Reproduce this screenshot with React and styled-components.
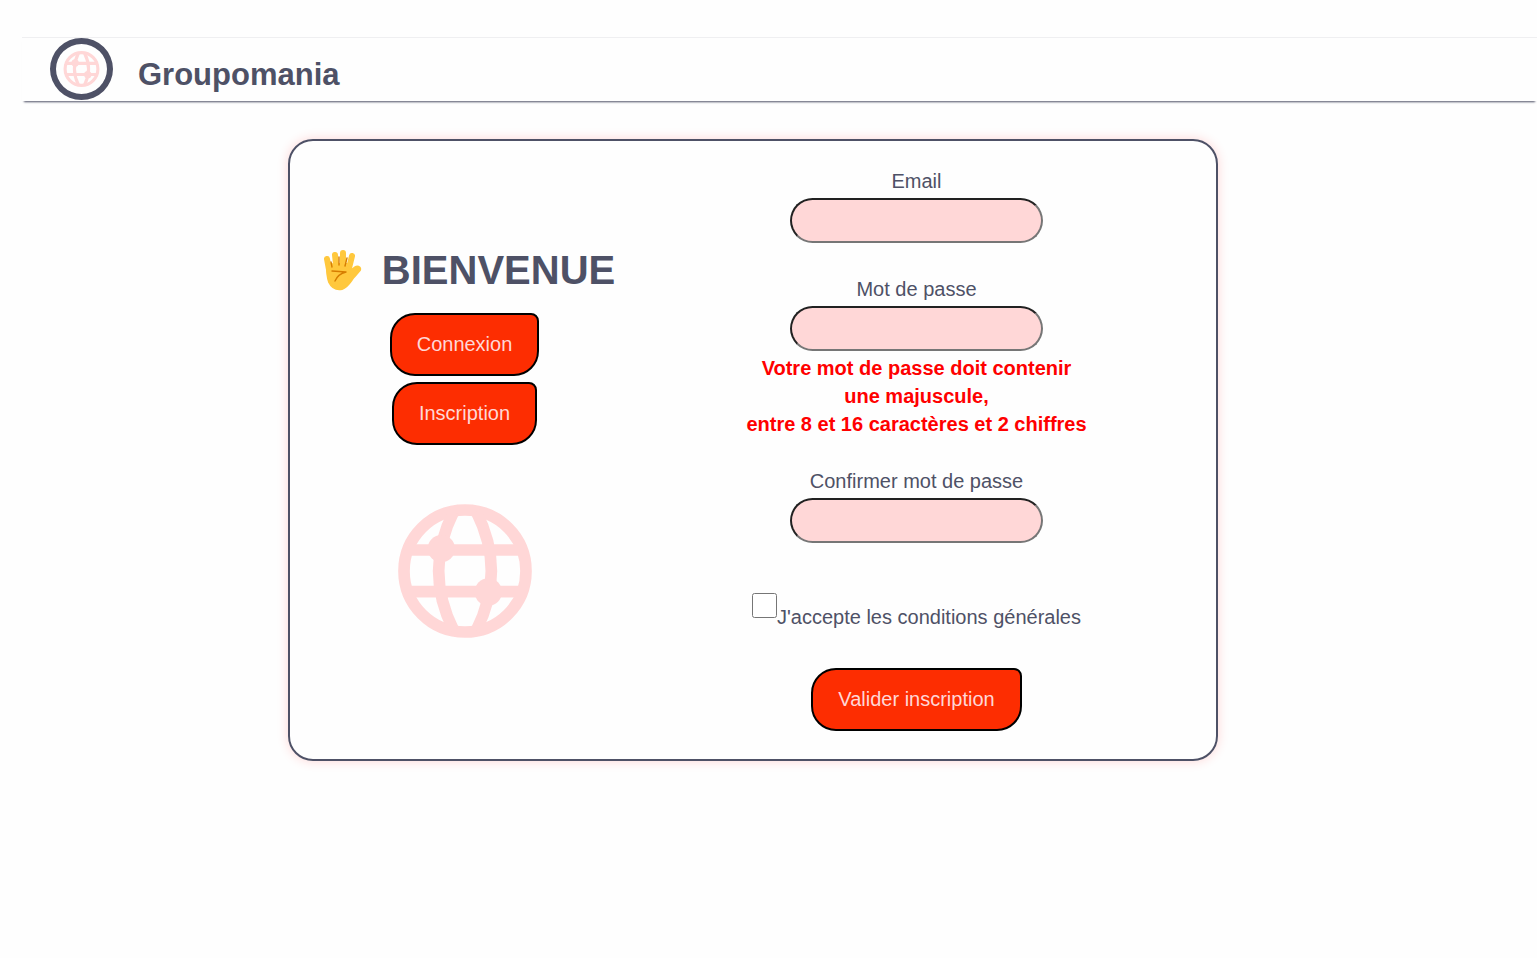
import React from "react";
import styled, { createGlobalStyle } from "styled-components";

const ink = "#4e5166";
const blush = "#ffd7d7";
const flame = "#fd2d01";

const GlobalStyle = createGlobalStyle`
  *, *::before, *::after { box-sizing: border-box; }
  body {
    margin: 0;
    background: #fefefe;
    color: ${ink};
    font: 20px/28px "Liberation Sans", Arial, sans-serif;
  }
`;

const Header = styled.header`
  display: flex;
  align-items: flex-start;
  gap: 25px;
  height: 64px;
  margin: 37px 0 0 22px;
  padding: 0 28px;
  border-top: 1px solid #efeff1;
  box-shadow: 0 3px 2px -2px ${ink};
`;

const Logo = styled.a`
  display: flex;
  width: 63px;
  height: 62px;
  padding: 7px;
  border: 6px solid ${ink};
  border-radius: 50%;
`;

const Brand = styled.p`
  margin: 19px 0 0;
  font-size: 31px;
  line-height: 36px;
  font-weight: bold;
`;

const Main = styled.main`
  padding: 38px 32px 40px 0;
`;

const Card = styled.section`
  display: grid;
  grid-template-columns: 300px 1fr;
  gap: 25px;
  max-width: 930px;
  margin: 0 auto;
  padding: 26px 22px 28px 25px;
  border: 2px solid ${ink};
  border-radius: 25px;
  box-shadow: 0 0 12px ${blush};
`;

const Welcome = styled.div`
  display: flex;
  flex-direction: column;
  align-items: center;
  gap: 6px;
  padding-top: 80px;
`;

const Title = styled.h1`
  display: flex;
  align-items: center;
  gap: 20px;
  margin: 0 0 14px;
  padding-left: 10px;
  font-size: 40px;
  line-height: 46px;
`;

const Button = styled.button`
  padding: 18px 25px;
  border: 2px solid #000;
  border-radius: 25px 8px 25px 25px;
  background: ${flame};
  color: ${blush};
  font: 20px/23px "Liberation Sans", Arial, sans-serif;
  cursor: pointer;
`;

const Picture = styled.div`
  display: flex;
  width: 134px;
  margin-top: 53px;
`;

const Form = styled.form`
  display: flex;
  flex-direction: column;
  align-items: center;
  text-align: center;
`;

const Field = styled.div`
  display: flex;
  flex-direction: column;
  align-items: center;
  gap: 3px;
  margin-bottom: ${(p) => p.$after}px;
`;

const Input = styled.input`
  width: 253px;
  height: 45px;
  padding: 0 20px;
  border: 2px inset #767676;
  border-radius: 25px;
  background: ${blush};
  color: ${ink};
  font: inherit;
`;

const Hint = styled.p`
  margin: 0;
  color: #f00;
  font-weight: bold;
`;

const Terms = styled.div`
  display: flex;
  align-items: flex-start;
  margin-bottom: 37px;
`;

const TermsLabel = styled.label`
  padding-top: 10px;
`;

const Checkbox = styled.input`
  width: 25px;
  height: 25px;
  margin: 0;
`;

function Globe() {
  return (
    <svg viewBox="39 27 402 402" width="100%" height="100%" fill="none" stroke={blush} strokeWidth="35" aria-hidden="true">
      <circle cx="240" cy="228" r="183" />
      <path d="M60 165H420M60 290H420M206 50Q116 228 206 406M274 50Q364 228 274 406" />
      <circle cx="169" cy="161" r="41" fill={blush} stroke="none" />
      <circle cx="310" cy="291" r="41" fill={blush} stroke="none" />
    </svg>
  );
}

function Hand() {
  return (
    <svg viewBox="0 0 38 41" width="38" height="41" fill="none" strokeLinecap="round" strokeLinejoin="round" aria-hidden="true">
      <path d="M3 15Q3 27 5 32C8 38 13 40 18 39C24 37 26 32 30 27L36 20C37 17 33 15 30 18L26 21L24 14L10 14Z" fill="#ffc83d" stroke="#ffc83d" strokeWidth="2" />
      <path d="M3 9L6 25M11 5L13 24M19 3L19 24M28 6L24 22" stroke="#ffc83d" strokeWidth="6" />
      <path d="M7 12L8 17M15 7L15 15M23 8L21 16M8 21L22 22Q14 24 11 31" stroke="#d67d00" strokeWidth="1.4" />
    </svg>
  );
}

export default function App() {
  return (
    <>
      <GlobalStyle />
      <Header>
        <Logo href="#" aria-label="Groupomania"><Globe /></Logo>
        <Brand>Groupomania</Brand>
      </Header>
      <Main>
        <Card>
          <Welcome>
            <Title><Hand />BIENVENUE</Title>
            <Button type="button">Connexion</Button>
            <Button type="button">Inscription</Button>
            <Picture><Globe /></Picture>
          </Welcome>
          <Form onSubmit={(e) => e.preventDefault()}>
            <Field $after={32}>
              <label htmlFor="email">Email</label>
              <Input id="email" type="email" />
            </Field>
            <Field $after={29}>
              <label htmlFor="password">Mot de passe</label>
              <Input id="password" type="password" aria-describedby="password-hint" />
              <Hint id="password-hint">
                Votre mot de passe doit contenir<br />une majuscule,<br />
                entre 8 et 16 caractères et 2 chiffres
              </Hint>
            </Field>
            <Field $after={50}>
              <label htmlFor="confirm">Confirmer mot de passe</label>
              <Input id="confirm" type="password" />
            </Field>
            <Terms>
              <Checkbox id="terms" type="checkbox" />
              <TermsLabel htmlFor="terms">J'accepte les conditions générales</TermsLabel>
            </Terms>
            <Button type="submit">Valider inscription</Button>
          </Form>
        </Card>
      </Main>
    </>
  );
}
